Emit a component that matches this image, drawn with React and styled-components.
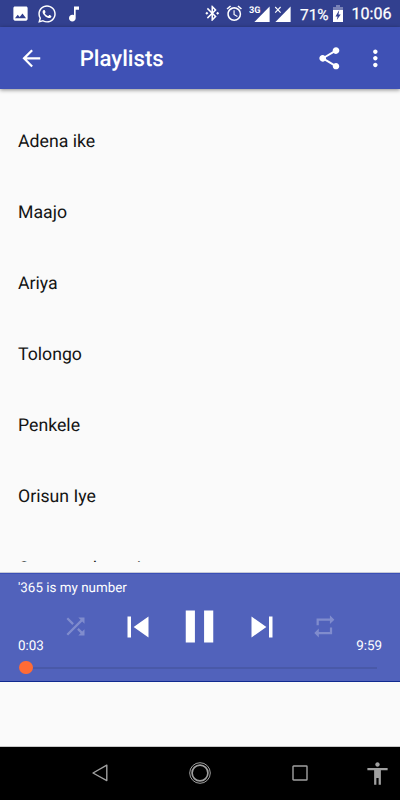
import React from "react";
import styled, { createGlobalStyle } from "styled-components";
import {
  MdAccessibility,
  MdAlarm,
  MdArrowBack,
  MdBluetoothConnected,
  MdImage,
  MdMoreVert,
  MdMusicNote,
  MdPause,
  MdRepeat,
  MdShare,
  MdShuffle,
  MdSkipNext,
  MdSkipPrevious,
} from "react-icons/md";
import { FaWhatsapp } from "react-icons/fa";

const GlobalStyle = createGlobalStyle`
  * {
    box-sizing: border-box;
  }

  body {
    margin: 0;
    background: #fafafa;
    font-family: Roboto, "Liberation Sans", sans-serif;
    text-rendering: geometricPrecision;
  }

  svg {
    display: block;
    flex: none;
  }
`;

const StyledScreen = styled.div`
  width: 400px;
  height: 800px;
  display: flex;
  flex-direction: column;
  overflow: hidden;
  background: #fafafa;
`;

const StyledStatusBar = styled.div`
  height: 27px;
  flex: none;
  display: flex;
  align-items: center;
  padding: 0 9px 0 10.5px;
  background: #32408f;
  color: #fff;
  font-size: 16px;
  line-height: 27px;

  .notifications {
    display: flex;
    align-items: center;
    gap: 7px;
  }

  .system {
    display: flex;
    align-items: center;
    margin-left: auto;
  }

  .alarm {
    margin-left: 3px;
  }

  .signal {
    margin-left: 6px;
  }

  .level {
    width: 29px;
    margin-left: 9px;
    margin-right: 4px;
    padding-top: 2px;
    font-size: 15.4px;
    line-height: 26px;
    white-space: nowrap;
    -webkit-text-stroke: 0.25px #fff;
  }

  .clock {
    width: 40px;
    margin-left: 8.5px;
    margin-right: -0.5px;
    font-size: 16.1px;
    white-space: nowrap;
    -webkit-text-stroke: 0.25px #fff;
  }
`;

const StyledToolbar = styled.header`
  height: 62px;
  flex: none;
  display: flex;
  align-items: center;
  padding: 0 11px 0 17.5px;
  background: #3f51b5;
  color: #fff;
  box-shadow: 0 1px 4px rgba(0, 0, 0, 0.45);
  z-index: 1;

  h1 {
    flex: 1;
    margin: 1px 0 0 35.5px;
    font-size: 22.2px;
    font-weight: 500;
    line-height: 30px;
  }
`;

const StyledMore = styled.div`
  margin-left: 20px;
`;

const StyledList = styled.ul`
  height: 473px;
  flex: none;
  margin: 0;
  padding: 18px 0 0;
  list-style: none;
  overflow: hidden;
`;

const StyledItem = styled.li`
  height: 71px;
  padding: 0 18px;
  color: #141414;
  font-size: 17.7px;
  line-height: 70px;

  &:last-child {
    padding-top: 1px;
  }
`;

const StyledPlayer = styled.section`
  height: 110px;
  flex: none;
  display: flex;
  flex-direction: column;
  margin-top: 10px;
  padding: 7px 18px 0;
  background: #5162bb;
  border-top: 1px solid #c6c9d6;
  border-bottom: 1px solid #10298f;
  box-shadow: inset 0 1px 0 #3a4fb6;
  color: #fff;
`;

const StyledSong = styled.div`
  font-size: 13.4px;
  line-height: 17px;
`;

const StyledControls = styled.div`
  height: 57px;
  display: flex;
  align-items: flex-end;
  justify-content: space-between;
`;

const StyledTime = styled.div`
  width: 27px;
  display: flex;
  justify-content: ${(props) => (props.$end ? "flex-end" : "flex-start")};
  font-size: 13.4px;
  line-height: 15px;
  white-space: nowrap;
`;

const StyledButtons = styled.div`
  height: 57px;
  display: grid;
  grid-template-columns: repeat(5, 62px);
  align-self: flex-start;
  margin: 1px 0 0 -0.2px;
`;

const StyledButton = styled.div`
  display: flex;
  align-items: center;
  justify-content: center;
  opacity: ${(props) => (props.$off ? 0.27 : 1)};
`;

const StyledSeek = styled.div`
  height: 27px;
  display: flex;
  align-items: center;
  padding: 0 5px 0 1px;

  .thumb {
    width: 13.5px;
    height: 13.5px;
    border-radius: 50%;
    background: #ff6b35;
  }

  .track {
    flex: 1;
    height: 2px;
    background: #4959a8;
  }
`;

const StyledNav = styled.nav`
  height: 54px;
  flex: none;
  display: grid;
  grid-template-columns: 150px 100px 100px 50px;
  align-items: center;
  margin-top: auto;
  padding-bottom: 1px;
  background: #000;
  border-top: 1px solid #c8c8c8;
  color: #a0a0a0;
`;

const StyledNavItem = styled.div`
  display: flex;
  justify-content: center;
  padding-left: ${(props) => props.$shift || 0}px;
`;

const SignalIcon = ({ label }) => (
  <svg width="21" height="18" viewBox="0 0 21 18" fill="#fff">
    <path d="M20.6 1.5V17H5.4z" />
    {label ? (
      <text x="0" y="8.2" fontSize="9.2" fontWeight="700">
        {label}
      </text>
    ) : (
      <path d="M5.2 2l5.4 5.6M10.6 2l-5.4 5.6" stroke="#fff" strokeWidth="1.1" />
    )}
  </svg>
);

const BatteryIcon = () => (
  <svg width="10" height="17" viewBox="0 0 10 17">
    <path d="M3 0h4v2h3v3H0V2h3z" fill="#fff" opacity="0.35" />
    <path d="M0 5h10v12H0z" fill="#fff" />
    <path d="M6.2 5L2.5 11.4h2.1L3.8 15l3.9-5.6H5.5z" fill="#32408f" />
  </svg>
);

const StatusBar = () => (
  <StyledStatusBar>
    <div className="notifications">
      <MdImage size={19} />
      <FaWhatsapp size={20} />
      <MdMusicNote size={20} />
    </div>
    <div className="system">
      <MdBluetoothConnected size={18.5} />
      <MdAlarm size={18.5} className="alarm" />
      <div className="signal">
        <SignalIcon label="3G" />
      </div>
      <SignalIcon />
      <div className="level">71%</div>
      <BatteryIcon />
      <div className="clock">10:06</div>
    </div>
  </StyledStatusBar>
);

const Toolbar = () => (
  <StyledToolbar>
    <MdArrowBack size={26.7} />
    <h1>Playlists</h1>
    <MdShare size={26.7} />
    <StyledMore>
      <MdMoreVert size={26.7} />
    </StyledMore>
  </StyledToolbar>
);

const Player = () => (
  <StyledPlayer>
    <StyledSong>'365 is my number</StyledSong>
    <StyledControls>
      <StyledTime>0:03</StyledTime>
      <StyledButtons>
        <StyledButton $off>
          <MdShuffle size={27} />
        </StyledButton>
        <StyledButton>
          <MdSkipPrevious size={42} />
        </StyledButton>
        <StyledButton>
          <MdPause size={55} />
        </StyledButton>
        <StyledButton>
          <MdSkipNext size={42} />
        </StyledButton>
        <StyledButton $off>
          <MdRepeat size={26.7} />
        </StyledButton>
      </StyledButtons>
      <StyledTime $end>9:59</StyledTime>
    </StyledControls>
    <StyledSeek>
      <div className="thumb" />
      <div className="track" />
    </StyledSeek>
  </StyledPlayer>
);

const NavBar = () => (
  <StyledNav>
    <StyledNavItem $shift={49}>
      <svg width="18" height="18" viewBox="0 0 18 18" fill="none">
        <path
          d="M15.8 1.2v15.4L2 9z"
          stroke="#a0a0a0"
          strokeWidth="1.4"
          strokeLinejoin="round"
        />
      </svg>
    </StyledNavItem>
    <StyledNavItem>
      <svg width="22" height="22" viewBox="0 0 22 22" fill="none">
        <circle cx="11" cy="11" r="10.3" stroke="#a0a0a0" strokeWidth="1" />
        <circle cx="11" cy="11" r="7.9" stroke="#a0a0a0" strokeWidth="1.7" />
      </svg>
    </StyledNavItem>
    <StyledNavItem>
      <svg width="16" height="16" viewBox="0 0 16 16" fill="none">
        <rect
          x="1"
          y="1"
          width="14"
          height="14"
          rx="0.6"
          stroke="#a0a0a0"
          strokeWidth="1.4"
        />
      </svg>
    </StyledNavItem>
    <StyledNavItem $shift={5}>
      <MdAccessibility size={27} />
    </StyledNavItem>
  </StyledNav>
);

const playlists = [
  "Adena ike",
  "Maajo",
  "Ariya",
  "Tolongo",
  "Penkele",
  "Orisun Iye",
  "Ose oun da omi",
];

const App = () => {
  return (
    <>
      <GlobalStyle />
      <StyledScreen>
        <StatusBar />
        <Toolbar />
        <StyledList>
          {playlists.map((name) => (
            <StyledItem key={name}>{name}</StyledItem>
          ))}
        </StyledList>
        <Player />
        <NavBar />
      </StyledScreen>
    </>
  );
};

export default App;
